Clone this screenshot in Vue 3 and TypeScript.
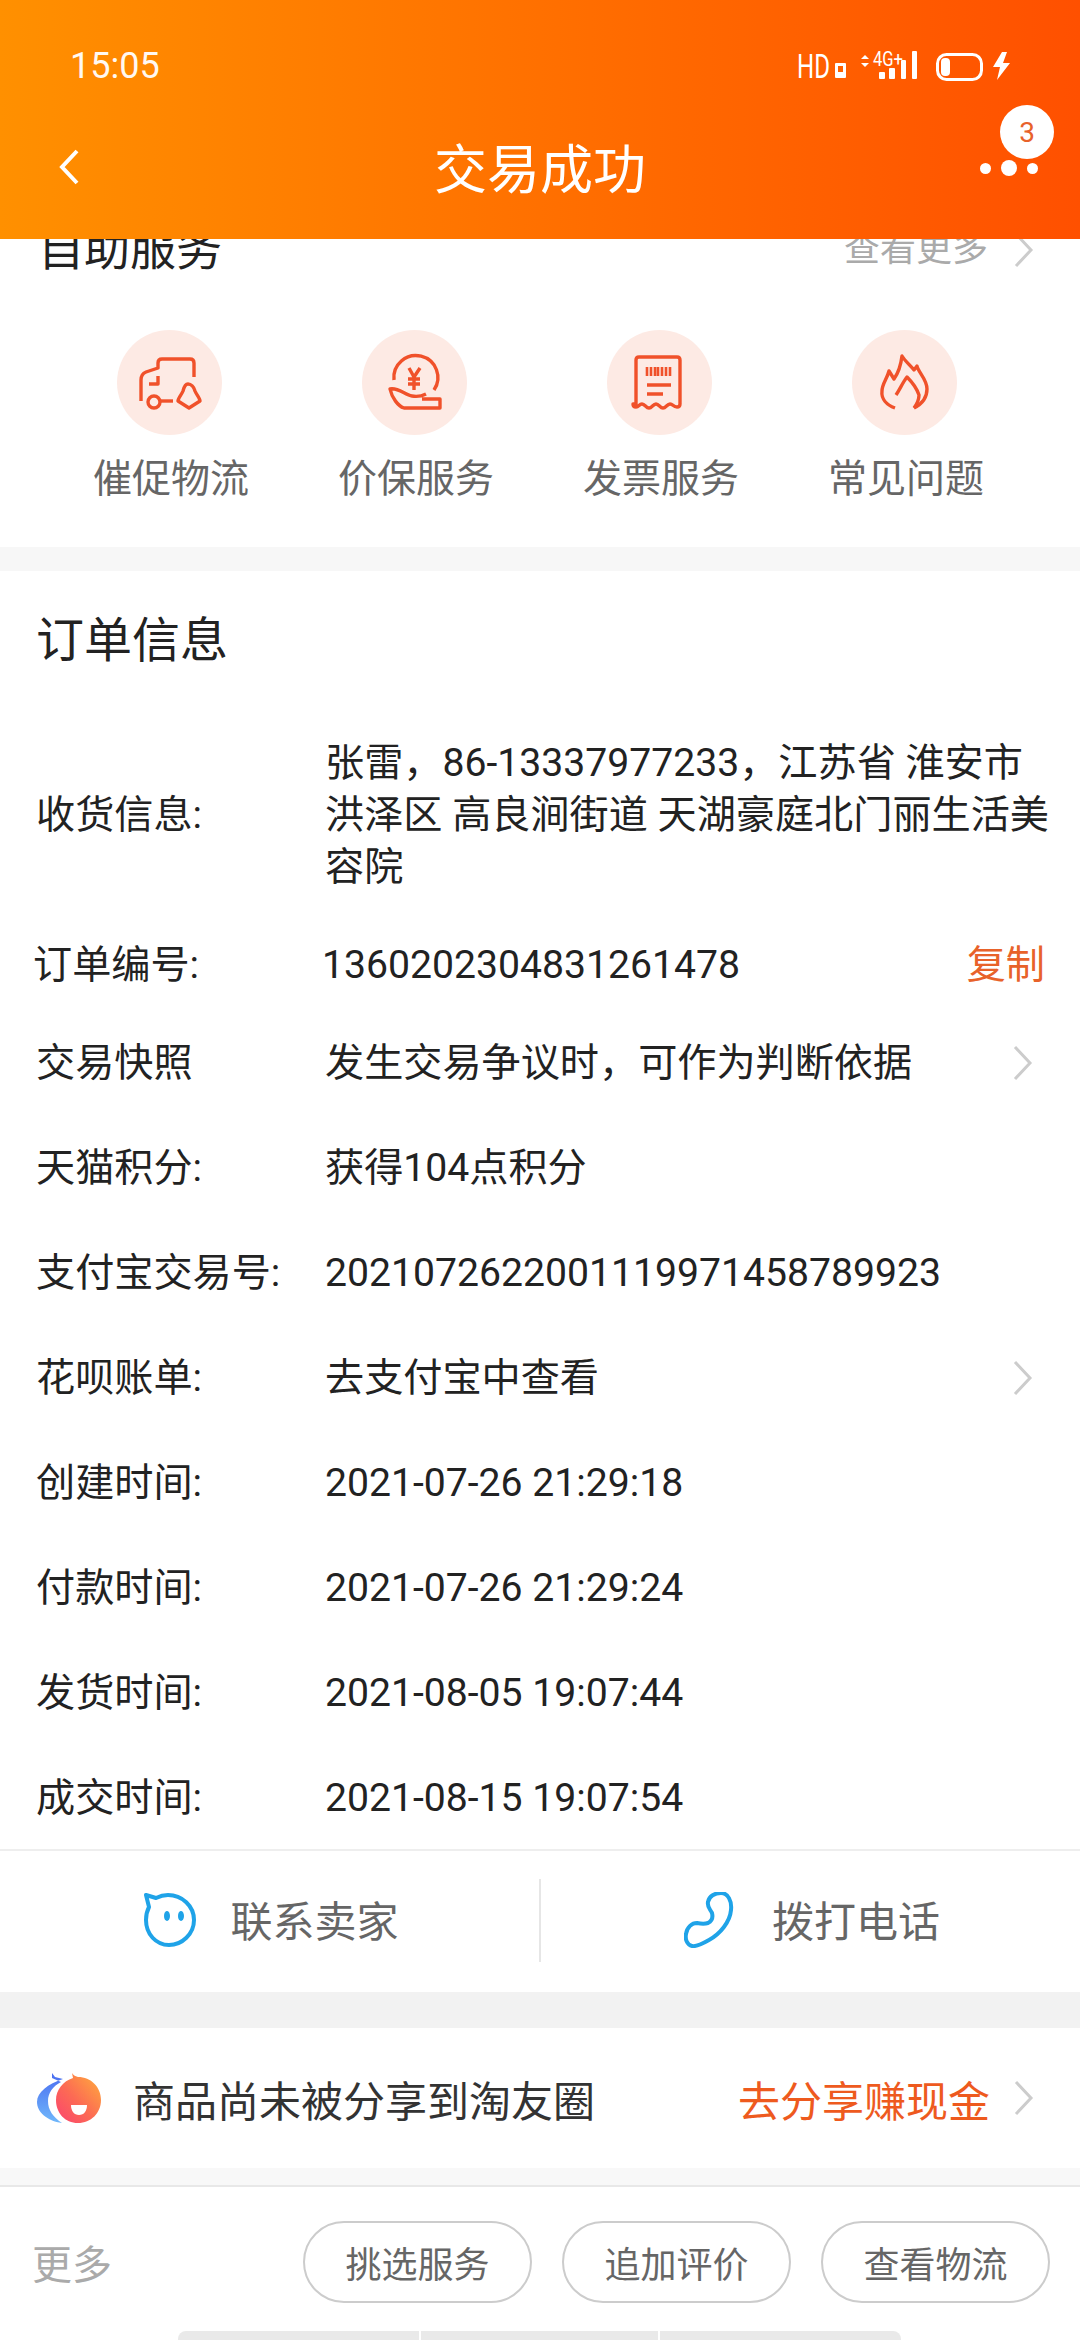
<template>
  <div class="page">
    <header class="top">
      <div class="status">
        <span class="time">15:05</span>
        <svg class="status-icons" width="230" height="40" viewBox="0 0 230 40">
          <text x="7" y="30" class="hd" textLength="33" lengthAdjust="spacingAndGlyphs">HD</text>
          <rect x="45" y="15" width="11" height="15" rx="1" fill="#fff" />
          <rect x="48" y="18" width="5" height="6" fill="#ff6200" />
          <path d="M75 7l-4 4h8zM75 19l-4-4h8z" fill="#fff" />
          <text x="83" y="18" class="net" textLength="30" lengthAdjust="spacingAndGlyphs">4G+</text>
          <rect x="89" y="24" width="6" height="7" rx="1" fill="#fff" />
          <rect x="99" y="20" width="6" height="11" rx="1" fill="#fff" />
          <rect x="111" y="12" width="5" height="19" rx="1" fill="#fff" />
          <rect x="122" y="3" width="5" height="28" rx="1" fill="#fff" />
          <rect x="147.5" y="6.5" width="44" height="25" rx="9" fill="none" stroke="#fff" stroke-width="3" />
          <rect x="151" y="10" width="9" height="18" rx="4" fill="#fff" />
          <path d="M212 4L203 19H210L207 32L220 15H213L217 4Z" fill="#fff" />
        </svg>
      </div>
      <div class="nav">
        <svg class="back" width="22" height="36" viewBox="0 0 22 36">
          <path d="M19 2L4 18l15 16" fill="none" stroke="#fff" stroke-width="4" />
        </svg>
        <span class="nav-title">交易成功</span>
        <div class="dots">
          <i class="dot"></i><i class="dot big"></i><i class="dot"></i>
          <span class="badge">3</span>
        </div>
      </div>
    </header>

    <section class="service">
      <div class="service-head">
        <span class="service-title">自助服务</span>
        <span class="more">查看更多</span>
        <svg class="arrow" width="22" height="36" viewBox="0 0 22 36">
          <path d="M3 2l15 16L3 34" fill="none" stroke="#ccc" stroke-width="3" />
        </svg>
      </div>
      <div class="service-grid">
        <div class="service-item">
          <div class="circle">
            <svg width="105" height="105" viewBox="0 0 105 105" class="line-icon">
              <path d="M24 71V50q0-6 5-8l12-4V33q0-4 4-4h28q4 0 4 4v14" />
              <path d="M32 54h9v-8" />
              <circle cx="37" cy="72" r="6" />
              <path d="M44 71h12" />
              <path d="M71 54c-3 0-4 3-5 7-1 3-5 7-5 10l11 7 11-7c0-3-4-7-5-10-1-4-4-7-7-7z" />
            </svg>
          </div>
          <span class="service-label">催促物流</span>
        </div>
        <div class="service-item">
          <div class="circle">
            <svg width="105" height="105" viewBox="0 0 105 105" class="line-icon">
              <path d="M32 50a22 22 0 1 1 40 10" />
              <path d="M47 38l5 9 6-9M46 49h12M46 54h12M52 47v13" />
              <path d="M60 69h18v9H42c-6-2-12-10-14-19 8-2 15 6 22 7 6 1 10 0 14-2" />
            </svg>
          </div>
          <span class="service-label">价保服务</span>
        </div>
        <div class="service-item">
          <div class="circle">
            <svg width="105" height="105" viewBox="0 0 105 105" class="line-icon">
              <path d="M29 74V30q0-3 3-3h38q3 0 3 3v44q0 3-3 3c-4 0-4-3-7-3s-4 4-7 4-4-4-7-4-4 4-7 4-4-4-7-4-3 3-6 3-3-1-3-3z" />
              <path d="M40 37v9M44 37v9M48 37v9M51 37v9M55 37v9M59 37v9M63 37v9" stroke-width="2.6" />
              <path d="M40 55h24M40 64h16" />
            </svg>
          </div>
          <span class="service-label">发票服务</span>
        </div>
        <div class="service-item">
          <div class="circle">
            <svg width="105" height="105" viewBox="0 0 105 105" class="line-icon">
              <path d="M43 78c-8-3-14-9-13-17 0-7 5-12 7-20l5 8c5-7 7-15 8-23 3 5 8 9 12 14l3-4c1 6 10 13 10 23 0 9-5 15-13 19" />
              <path d="M44 65c4-6 7-13 11-18 5 5 10 12 12 18 0 5-2 9-5 13" />
            </svg>
          </div>
          <span class="service-label">常见问题</span>
        </div>
      </div>
    </section>

    <section class="order">
      <h2 class="order-title">订单信息</h2>
      <div class="row address">
        <span class="row-label">收货信息:</span>
        <span class="row-value">张雷，86-13337977233，江苏省 淮安市 洪泽区 高良涧街道 天湖豪庭北门丽生活美容院</span>
      </div>
      <div class="row number">
        <span class="row-label">订单编号:</span>
        <span class="row-value">1360202304831261478</span>
        <span class="copy">复制</span>
      </div>
      <div v-for="item in rows" :key="item.label" class="row">
        <span class="row-label">{{ item.label }}</span>
        <span class="row-value">{{ item.value }}</span>
        <svg v-if="item.link" class="arrow row-arrow" width="22" height="36" viewBox="0 0 22 36">
          <path d="M3 2l15 16L3 34" fill="none" stroke="#ccc" stroke-width="3" />
        </svg>
      </div>
    </section>

    <section class="contact">
      <div class="contact-item">
        <svg width="54" height="54" viewBox="0 0 54 54">
          <path d="M3 2l10 3c4-2 8-3 12-3 14 0 26 11 26 25S39 52 26 52 3 41 3 27c0-5 1-9 3-13z" fill="none" stroke="#1fa3e8" stroke-width="4" stroke-linejoin="round" />
          <ellipse cx="24" cy="23" rx="3" ry="5" fill="#1fa3e8" />
          <ellipse cx="38" cy="23" rx="3" ry="5" fill="#1fa3e8" />
        </svg>
        <span class="contact-text">联系卖家</span>
      </div>
      <div class="contact-item with-line">
        <svg width="50" height="56" viewBox="0 0 50 56">
          <path d="M24 10C25 4 31 1 37 1C44 1 48 9 47 18C46 30 36 42 25 48C18 52 12 55 8 54C3 53 1 47 2 42C3 35 8 31 13 31C18 32 21 32 24 31C28 29 29 25 28 21C26 17 23 15 24 10Z" fill="none" stroke="#1fa3e8" stroke-width="4" stroke-linejoin="round" />
        </svg>
        <span class="contact-text">拨打电话</span>
      </div>
    </section>

    <section class="share">
      <svg width="66" height="52" viewBox="0 0 66 52">
        <defs>
          <linearGradient id="blueFill" x1="0" y1="0" x2="0" y2="1">
            <stop offset="0" stop-color="#4a6cf0" />
            <stop offset="1" stop-color="#70b8fb" />
          </linearGradient>
          <linearGradient id="redFill" x1="1" y1="0" x2="0" y2="1">
            <stop offset="0" stop-color="#ffb03a" />
            <stop offset="0.55" stop-color="#fc6a54" />
            <stop offset="1" stop-color="#fb4270" />
          </linearGradient>
        </defs>
        <path d="M16 1l3 4 8 2C12 12 1 20 1 30c0 10 10 19 25 21-9-6-14-13-14-22 0-8 5-15 13-19l-9-4z" fill="url(#blueFill)" />
        <path d="M36 1c1 2 3 3 6 4 13 0 23 10 23 23S55 51 42 51 20 41 20 28c0-10 7-19 17-22z" fill="url(#redFill)" />
        <path d="M35 33h16c0 6-3 10-8 10s-8-4-8-10z" fill="#fff" />
      </svg>
      <span class="share-text">商品尚未被分享到淘友圈</span>
      <span class="share-link">去分享赚现金</span>
      <svg class="arrow" width="22" height="36" viewBox="0 0 22 36">
        <path d="M3 2l15 16L3 34" fill="none" stroke="#ccc" stroke-width="3" />
      </svg>
    </section>

    <div class="strip"></div>

    <footer class="foot">
      <div class="foot-row">
        <span class="foot-more">更多</span>
        <button v-for="b in buttons" :key="b" class="pill">{{ b }}</button>
      </div>
      <div class="home-bar"><i></i><i></i><i></i></div>
    </footer>
  </div>
</template>

<script setup lang="ts">
interface OrderRow {
  label: string
  value: string
  link?: boolean
}

const rows: OrderRow[] = [
  { label: '交易快照', value: '发生交易争议时，可作为判断依据', link: true },
  { label: '天猫积分:', value: '获得104点积分' },
  { label: '支付宝交易号:', value: '2021072622001119971458789923' },
  { label: '花呗账单:', value: '去支付宝中查看', link: true },
  { label: '创建时间:', value: '2021-07-26 21:29:18' },
  { label: '付款时间:', value: '2021-07-26 21:29:24' },
  { label: '发货时间:', value: '2021-08-05 19:07:44' },
  { label: '成交时间:', value: '2021-08-15 19:07:54' },
]

const buttons = ['挑选服务', '追加评价', '查看物流']
</script>

<style>
html, body {
  background: #fff;
}
</style>

<style scoped>
.page {
  width: 1080px;
  height: 2340px;
  overflow: hidden;
  background: #fff;
  font-family: Roboto, "Noto Sans CJK SC", sans-serif;
  color: #222;
}

/* 顶部 */
.top {
  height: 239px;
  background: linear-gradient(90deg, #ff9000, #ff5000);
  color: #fff;
}
.status {
  height: 132px;
  display: flex;
  align-items: center;
  justify-content: space-between;
  padding: 0 60px 0 70px;
}
.status-icons {
  margin-top: 4px;
}
.time {
  font-size: 36px;
  opacity: 0.95;
}
.hd {
  font: 34px Roboto, sans-serif;
  fill: #fff;
}
.net {
  font: 20px Roboto, sans-serif;
  fill: #fff;
}
.nav {
  height: 76px;
  position: relative;
  display: flex;
  align-items: center;
  justify-content: center;
  padding-bottom: 8px;
  box-sizing: border-box;
}
.back {
  position: absolute;
  left: 58px;
  top: 17px;
}
.nav-title {
  font-size: 53px;
}
.dots {
  position: absolute;
  right: 42px;
  top: 28px;
  display: flex;
  align-items: center;
  gap: 10px;
}
.dot {
  width: 11px;
  height: 11px;
  border-radius: 50%;
  background: #fff;
}
.dot.big {
  width: 16px;
  height: 16px;
}
.badge {
  position: absolute;
  left: 20px;
  top: -55px;
  width: 54px;
  height: 54px;
  border-radius: 50%;
  background: #fff;
  color: #e8622a;
  font-size: 28px;
  display: flex;
  align-items: center;
  justify-content: center;
}

/* 自助服务 */
.service {
  height: 308px;
  border-bottom: 24px solid #f7f7f7;
}
.service-head {
  height: 43px;
  display: flex;
  align-items: flex-end;
  overflow: hidden;
  padding: 0 45px 0 38px;
}
.service-title {
  font-size: 46px;
  line-height: 66px;
  margin-right: auto;
}
.more {
  font-size: 36px;
  line-height: 66px;
  color: #aaa;
  margin-right: 25px;
}
.service-head .arrow {
  margin-bottom: 14px;
  flex: none;
}
.service-grid {
  display: grid;
  grid-template-columns: repeat(4, 245px);
  padding: 48px 0 0 47px;
}
.service-item {
  display: flex;
  flex-direction: column;
  align-items: center;
  gap: 16px;
}
.circle {
  width: 105px;
  height: 105px;
  border-radius: 50%;
  background: #fdeae4;
}
.line-icon {
  display: block;
  fill: none;
  stroke: #f0512a;
  stroke-width: 3.4;
  stroke-linejoin: round;
}
.service-label {
  font-size: 39px;
  line-height: 56px;
  color: #666;
  margin-left: 3px;
}

/* 订单信息 */
.order-title {
  height: 138px;
  margin: 0;
  padding: 2px 0 0 36px;
  box-sizing: border-box;
  font-size: 48px;
  font-weight: 400;
  line-height: 136px;
}
.row {
  height: 105px;
  box-sizing: border-box;
  display: flex;
  align-items: center;
  padding: 2px 35px 0 36px;
  font-size: 39.15px;
  line-height: 52px;
}
.row.address {
  height: 210px;
  padding-right: 16px;
}
.row.number {
  height: 90px;
  padding-left: 33px;
}
.row-label {
  width: 289px;
  flex: none;
}
.row-value {
  flex: 1;
}
.copy {
  color: #e8622a;
}
.row-arrow {
  margin-right: 11px;
  flex: none;
}

/* 联系 */
.contact {
  height: 141px;
  display: flex;
  border-top: 2px solid #eee;
  border-bottom: 36px solid #f2f2f2;
}
.contact-item {
  flex: 1;
  position: relative;
  display: flex;
  align-items: center;
  justify-content: center;
  gap: 33px;
  font-size: 42px;
  color: #666;
  padding: 0 0 3px 3px;
}
.contact-text {
  padding-bottom: 4px;
}
.with-line {
  gap: 38px;
  padding-left: 5px;
}
.with-line::before {
  content: "";
  position: absolute;
  left: 0;
  top: 28px;
  bottom: 30px;
  width: 2px;
  background: #e6e6e6;
}

/* 分享 */
.share {
  height: 140px;
  display: flex;
  align-items: center;
  padding: 0 45px 0 36px;
}
.share-text {
  margin-left: 31px;
  font-size: 42px;
  color: #333;
}
.share-link {
  margin-left: auto;
  margin-right: 23px;
  font-size: 42px;
  color: #ee5a1e;
}
.strip {
  height: 17px;
  background: #f8f8f8;
  border-bottom: 2px solid #e8e8e8;
}

/* 底部 */
.foot {
  padding-top: 34px;
}
.foot-row {
  display: flex;
  align-items: center;
  gap: 30px;
  padding: 0 30px 0 32px;
}
.foot-more {
  margin-right: auto;
  font-size: 40px;
  color: #aaa;
}
.pill {
  width: 229px;
  height: 82px;
  box-sizing: border-box;
  border: 2px solid #ccc;
  border-radius: 41px;
  background: #fff;
  color: #666;
  font: 36px Roboto, "Noto Sans CJK SC", sans-serif;
  padding: 0;
}
.home-bar {
  display: grid;
  grid-template-columns: 241px 237px 241px;
  gap: 2px;
  margin: 28px 0 0 178px;
  width: 723px;
  height: 9px;
}
.home-bar i {
  background: #e9e9e9;
}
.home-bar i:first-child {
  border-top-left-radius: 8px;
}
.home-bar i:last-child {
  border-top-right-radius: 8px;
}
</style>
